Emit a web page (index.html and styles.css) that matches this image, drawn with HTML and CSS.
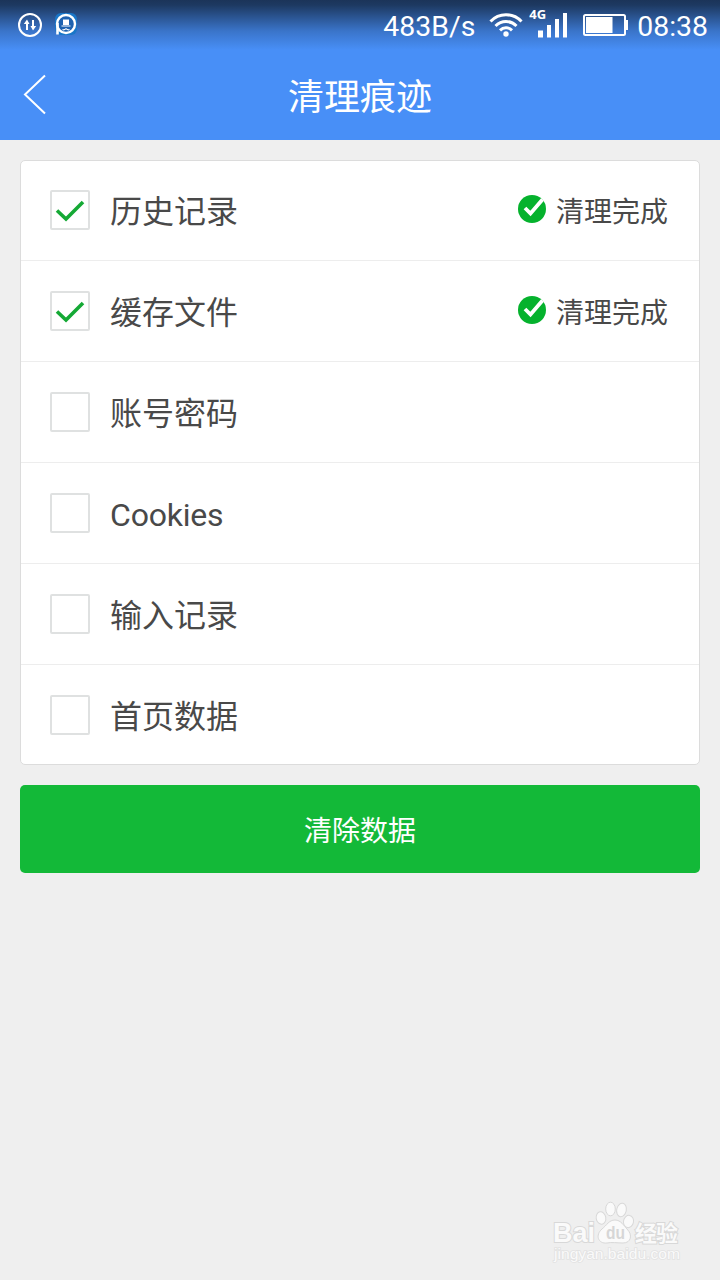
FILE: index.html
```html
<!DOCTYPE html>
<html lang="zh-CN">

<head>
    <meta charset="UTF-8">
    <meta name="viewport" content="width=device-width, initial-scale=1.0">
    <title>清理痕迹</title>
    <link rel="stylesheet" href="styles.css">
</head>

<body>
    <header class="header">
        <!-- 状态栏 -->
        <div class="status-bar">
            <div class="status-left">
                <svg width="26" height="26" viewBox="0 0 26 26">
                    <circle cx="13" cy="13" r="11" fill="none" stroke="#fff" stroke-width="2" />
                    <path d="M10 18V10M16 8v8" stroke="#fff" stroke-width="2" />
                    <path d="M6.8 12L10 7.5l2.5 4.5zM13.5 14l2.5 4.5 3.2-4.5z" fill="#fff" />
                </svg>
                <svg width="26" height="26" viewBox="0 0 26 26">
                    <rect x="2" y="1" width="22" height="22" rx="6" fill="#1976c8" />
                    <circle cx="13" cy="12" r="9" fill="#1e62b0" stroke="#fff" stroke-width="2.4" />
                    <path d="M4.500 11v11.500" stroke="#fff" stroke-width="2.600" />
                    <path d="M10 13V7.500h6V13z" fill="#fff" />
                    <path d="M8.500 14h9M9.500 17.500c1.500 1 2.500 0 3.500-.8 1 .8 2 1.800 3.500.8" fill="none" stroke="#fff" stroke-width="1.200" />
                </svg>
            </div>
            <div class="status-right">
                <span class="speed">483B/s</span>
                <svg class="wifi" width="34" height="26" viewBox="0 0 34 26">
                    <g fill="none" stroke="#fff" stroke-width="3">
                        <path d="M1.500 9.500C10 .5 24 .5 32.500 9.500" />
                        <path d="M6.500 14c6-6 15-6 21 0" />
                        <path d="M11 18.300c3.400-3.300 8.600-3.300 12 0" />
                    </g>
                    <circle cx="17" cy="22" r="2.700" fill="#fff" />
                </svg>
                <div class="signal">
                    <span class="net">4G</span>
                    <svg width="30" height="26" viewBox="0 0 30 26">
                        <path d="M0 18.500h5v7H0zM9 13h4v12.500H9zM17 7h4v18.500h-4zM25 1h4v24.500h-4z" fill="#fff" />
                    </svg>
                </div>
                <svg class="battery" width="46" height="24" viewBox="0 0 46 24">
                    <rect x="1" y="1" width="41" height="20" rx="1.500" fill="none" stroke="#fff" stroke-width="2" />
                    <rect x="3" y="3" width="26.500" height="16" fill="#fff" />
                    <path d="M42 6h3v10h-3z" fill="#fff" />
                </svg>
                <span class="time">08:38</span>
            </div>
        </div>
        <!-- 标题栏 -->
        <div class="title-bar">
            <svg class="back" width="24" height="42" viewBox="0 0 24 42">
                <path d="M22 1.500L2 20.500l20 19" fill="none" stroke="#fff" stroke-width="2" />
            </svg>
            <h1 class="title">清理痕迹</h1>
        </div>
    </header>

    <main class="content">
        <ul class="list">
            <li class="item">
                <span class="checkbox">
                    <svg width="36" height="36" viewBox="0 0 36 36">
                        <path d="M5 18.500l9 8.500L31 10" fill="none" stroke="#15a935" stroke-width="3.600" />
                    </svg>
                </span>
                <span class="name">历史记录</span>
                <span class="done">
                    <svg width="30" height="30" viewBox="0 0 30 30">
                        <circle cx="15" cy="15" r="14" fill="#05b22d" />
                        <path d="M8 14l5.500 5.500L25.500 5.500" fill="none" stroke="#fff" stroke-width="3.800" />
                    </svg>
                    <span class="done-text">清理完成</span>
                </span>
            </li>
            <li class="item">
                <span class="checkbox">
                    <svg width="36" height="36" viewBox="0 0 36 36">
                        <path d="M5 18.500l9 8.500L31 10" fill="none" stroke="#15a935" stroke-width="3.600" />
                    </svg>
                </span>
                <span class="name">缓存文件</span>
                <span class="done">
                    <svg width="30" height="30" viewBox="0 0 30 30">
                        <circle cx="15" cy="15" r="14" fill="#05b22d" />
                        <path d="M8 14l5.500 5.500L25.500 5.500" fill="none" stroke="#fff" stroke-width="3.800" />
                    </svg>
                    <span class="done-text">清理完成</span>
                </span>
            </li>
            <li class="item">
                <span class="checkbox"></span>
                <span class="name">账号密码</span>
            </li>
            <li class="item">
                <span class="checkbox"></span>
                <span class="name name-en">Cookies</span>
            </li>
            <li class="item">
                <span class="checkbox"></span>
                <span class="name">输入记录</span>
            </li>
            <li class="item">
                <span class="checkbox"></span>
                <span class="name">首页数据</span>
            </li>
        </ul>
        <button class="clear-btn" type="button">清除数据</button>
    </main>

    <!-- 右下角水印 -->
    <div class="watermark">
        <svg width="136" height="66" viewBox="0 0 136 66">
            <g class="wm-shape">
                <text class="wm-logo" x="2" y="42" textLength="42" lengthAdjust="spacingAndGlyphs">Bai</text>
                <ellipse cx="50" cy="18" rx="4.800" ry="6.300" transform="rotate(-10 50 18)" />
                <ellipse cx="59.500" cy="9" rx="4.800" ry="6.800" />
                <ellipse cx="70.500" cy="10" rx="4.800" ry="6.800" transform="rotate(12 70.500 10)" />
                <ellipse cx="77.500" cy="21.500" rx="5" ry="6.200" transform="rotate(10 77.500 21.500)" />
                <path d="M64 20c6 0 9 6 12 9 6 6 4 14-4 14-5 0-12-1-16 0-9 1-12-8-5-14 5-4 7-9 13-9z" />
            </g>
            <text class="wm-du" x="55" y="39" textLength="19" lengthAdjust="spacingAndGlyphs">du</text>
            <text class="wm-cn" x="84" y="41" textLength="43">经验</text>
            <text class="wm-url" x="3" y="59" textLength="126" lengthAdjust="spacingAndGlyphs">jingyan.baidu.com</text>
        </svg>
    </div>
</body>

</html>
```
FILE: styles.css
```css
* {
    box-sizing: border-box;
}

body {
    position: relative;
    min-height: 1280px;
    margin: 0;
    background: #efefef;
    color: #494949;
    font-family: Roboto, "Noto Sans CJK SC", sans-serif;
}

svg {
    display: block;
    flex: none;
}

/* 顶部 */
.header {
    height: 140px;
    background: #488ff7;
    color: #fff;
}

.status-bar {
    display: flex;
    justify-content: space-between;
    height: 50px;
    padding: 0 12px 0 17px;
    background: linear-gradient(#1b3459 0, #1d3961 10%, #3a74c9 62%, #488ff7 100%);
}

.status-left {
    display: flex;
    gap: 10px;
    padding-top: 12px;
}

.status-right {
    display: flex;
    align-items: flex-start;
}

.speed,
.time {
    padding-top: 10px;
    font-size: 28.4px;
    line-height: 34px;
}

.wifi {
    margin: 12px 0 0 14px;
}

.signal {
    position: relative;
    margin: 12px 0 0 15px;
}

.net {
    position: absolute;
    top: -5px;
    left: -9px;
    font: bold 13px/14px "Open Sans", sans-serif;
}

.battery {
    margin: 14px 8px 0 15px;
}

.title-bar {
    display: flex;
    align-items: center;
    height: 90px;
    padding: 0 23px;
}

.title {
    flex: 1;
    margin: 6px 24px 0 0;
    font-size: 36px;
    font-weight: 400;
    line-height: 54px;
    text-align: center;
}

/* 列表 */
.content {
    padding: 20px;
}

.list {
    margin: 0 0 20px;
    padding: 0;
    border: 1px solid #dcdcdc;
    border-radius: 5px;
    background: #fff;
    list-style: none;
}

.item {
    display: flex;
    align-items: center;
    padding: 30px 31px 30px 29px;
    border-bottom: 1px solid #ededed;
}

.item:first-child {
    padding-top: 29px;
}

.item:last-child {
    padding-bottom: 29px;
    border-bottom: 0;
}

.checkbox {
    width: 40px;
    height: 40px;
    border: 2px solid #dfe1e1;
    border-radius: 2px;
}

.name {
    margin: 2px 0 -2px 20px;
    font-size: 32px;
    line-height: 40px;
}

.name-en {
    letter-spacing: -0.2px;
}

.done {
    display: flex;
    align-items: center;
    gap: 9px;
    margin-left: auto;
}

.done svg {
    margin-top: -2px;
}

.done-text {
    margin: 3px 0 -3px;
    font-size: 28px;
    line-height: 40px;
}

.clear-btn {
    display: block;
    width: 100%;
    height: 88px;
    padding: 0;
    border: 0;
    border-radius: 5px;
    background: #13b938;
    color: #fff;
    font-family: inherit;
    font-size: 28px;
}

/* 水印 */
.watermark {
    position: absolute;
    top: 1200px;
    left: 551px;
}

.wm-shape {
    fill: #fafafa;
    stroke: #d8d8d8;
    stroke-width: 1px;
}

.wm-logo {
    paint-order: stroke;
    stroke-width: 2px;
    font: bold 28px "Liberation Sans", sans-serif;
}

.wm-du {
    fill: #d6d6d6;
    font: bold 19px "Liberation Sans", sans-serif;
}

.wm-cn {
    fill: #fafafa;
    stroke: #d8d8d8;
    stroke-width: 2px;
    paint-order: stroke;
    font: bold 22px "Noto Sans CJK SC", sans-serif;
}

.wm-url {
    fill: #fafafa;
    stroke: #e2e2e2;
    stroke-width: 1.5px;
    paint-order: stroke;
    font: 14px "Liberation Sans", sans-serif;
}
```
